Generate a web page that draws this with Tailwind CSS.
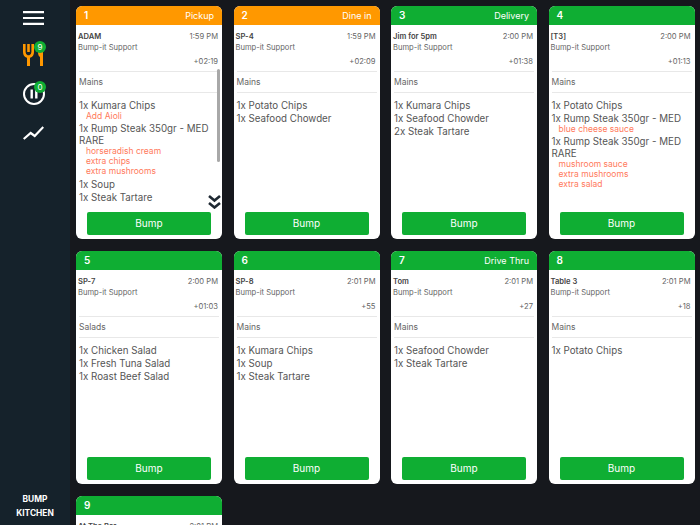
<!DOCTYPE html>
<html><head><meta charset="utf-8"><script src="https://cdn.jsdelivr.net/npm/@tailwindcss/browser@4"></script></head>
<body class="m-0 h-[525px] w-[700px] overflow-hidden bg-[#16181d] font-['Inter',sans-serif]">
<div class="flex h-[525px] w-[700px] overflow-hidden">
<aside class="flex h-full w-[70px] shrink-0 flex-col items-center bg-[#15222b] pr-[3px]">
  <svg class="mt-[11px]" width="21" height="14" viewBox="0 0 21 14"><path d="M0 1.200h21M0 7h21M0 12.800h21" stroke="#fff" stroke-width="2.200"/></svg>
  <div class="relative mt-[19px] h-[22px] w-[21px]">
    <svg width="21" height="22" viewBox="0 0 21 22" class="block"><path d="M1.300 0v8q0 3.500 3 4.500h2.400Q9.700 11.500 9.700 8V0M5.500 0v8" fill="none" stroke="#ff9800" stroke-width="2.600"/><path d="M4 12h3v10H4z" fill="#ff9800"/><path d="M15 8h5v14h-3V13q-2-1-2-5z" fill="#ff9800"/></svg>
    <span class="absolute left-[11px] top-[-3px] flex h-[12px] w-[12px] items-center justify-center rounded-full bg-[#0fae33] text-[8px] leading-none text-white">9</span>
  </div>
  <div class="relative mt-[17px] h-[22px] w-[22px]">
    <svg width="22" height="22" viewBox="0 0 22 22" class="block"><circle cx="11" cy="11" r="10" fill="none" stroke="#fff" stroke-width="2"/><path d="M8.700 6.500v9M13.300 6.500v9" stroke="#fff" stroke-width="2.400"/></svg>
    <span class="absolute left-[11.500px] top-[-2px] flex h-[12px] w-[12px] items-center justify-center rounded-full bg-[#0fae33] text-[8px] leading-none text-white">0</span>
  </div>
  <svg class="mt-[21px]" width="21" height="14" viewBox="0 0 21 14"><path d="M0.700 13l7-6 4 3 8.600-9" fill="none" stroke="#fff" stroke-width="2.200"/></svg>
  <div class="mb-[5px] mt-auto pl-[3px] text-center text-[8.400px] font-bold leading-[14px] text-white">
    <div>BUMP</div><div>KITCHEN</div>
  </div>
</aside>
<main class="grid flex-1 grid-cols-[repeat(4,146px)] content-start gap-x-[11.500px] gap-y-[12px] pl-[6px] pt-[6px]">

<article class="flex h-[233px] flex-col overflow-hidden rounded-[6px] bg-white">
  <header class="flex h-[19px] shrink-0 items-center justify-between bg-[#ff9800] pl-[8px] pr-[8px] text-white"><b class="text-[10px] font-semibold">1</b><span class="text-[9px]">Pickup</span></header>
  <div class="relative flex min-h-0 flex-1 flex-col">
    <div class="px-[2px] pt-[7px] text-[7.600px] leading-[10px] text-[#666]">
      <div class="flex justify-between pr-[2px]"><b class="font-semibold text-[#444]">ADAM</b><span>1:59 PM</span></div>
      <div class="mt-[1px]">Bump-it Support</div>
      <div class="mt-[4px] pr-[2px] text-right">+02:19</div>
    </div>
    <div class="mx-[3px] mt-[4px] border-y border-[#e8e8e8] pb-[4px] pt-[5px] text-[8.500px] leading-[11px] text-[#666]">Mains</div>
    <div class="mx-[3px] mt-[6px] text-[9.750px] leading-[12px] text-[#555]">
      <div class="mt-[1px]">1x Kumara Chips</div><div class="pb-[2px] pl-[7px] text-[8.500px] leading-[8px] text-[#ff7a5c]">Add Aioli</div>
      <div class="mt-[1px] pr-[6px]">1x Rump Steak 350gr - MED RARE</div>
      <div class="pb-[2px] pl-[7px] text-[8.500px] leading-[8px] text-[#ff7a5c]">horseradish cream</div><div class="pb-[2px] pl-[7px] text-[8.500px] leading-[8px] text-[#ff7a5c]">extra chips</div><div class="pb-[2px] pl-[7px] text-[8.500px] leading-[8px] text-[#ff7a5c]">extra mushrooms</div>
      <div class="mt-[2px]">1x Soup</div><div class="mt-[1px]">1x Steak Tartare</div>
    </div>
    <span class="absolute left-[141px] top-[44px] h-[93px] w-[3px] rounded-full bg-[#a8a8a8]"></span>
    <svg class="absolute right-[1px] top-[170px]" width="13" height="14" viewBox="0 0 13 14"><path d="M1 1l5.500 4.500 5.500-4.500M1 8l5.500 4.500 5.500-4.500" fill="none" stroke="#1f2933" stroke-width="2.600"/></svg>
    <button class="mx-auto mb-[4px] mt-auto block h-[23px] w-[124px] rounded-[2px] bg-[#0fae33] text-[10px] text-white">Bump</button>
  </div>
</article>

<article class="flex h-[233px] flex-col overflow-hidden rounded-[6px] bg-white">
  <header class="flex h-[19px] shrink-0 items-center justify-between bg-[#ff9800] pl-[8px] pr-[8px] text-white"><b class="text-[10px] font-semibold">2</b><span class="text-[9px]">Dine in</span></header>
  <div class="flex min-h-0 flex-1 flex-col">
    <div class="px-[2px] pt-[7px] text-[7.600px] leading-[10px] text-[#666]">
      <div class="flex justify-between pr-[2px]"><b class="font-semibold text-[#444]">SP-4</b><span>1:59 PM</span></div>
      <div class="mt-[1px]">Bump-it Support</div>
      <div class="mt-[4px] pr-[2px] text-right">+02:09</div>
    </div>
    <div class="mx-[3px] mt-[4px] border-y border-[#e8e8e8] pb-[4px] pt-[5px] text-[8.500px] leading-[11px] text-[#666]">Mains</div>
    <div class="mx-[3px] mt-[6px] text-[9.750px] leading-[12px] text-[#555]"><div class="mt-[1px]">1x Potato Chips</div><div class="mt-[1px]">1x Seafood Chowder</div></div>
    <button class="mx-auto mb-[4px] mt-auto block h-[23px] w-[124px] rounded-[2px] bg-[#0fae33] text-[10px] text-white">Bump</button>
  </div>
</article>

<article class="flex h-[233px] flex-col overflow-hidden rounded-[6px] bg-white">
  <header class="flex h-[19px] shrink-0 items-center justify-between bg-[#0fae33] pl-[8px] pr-[8px] text-white"><b class="text-[10px] font-semibold">3</b><span class="text-[9px]">Delivery</span></header>
  <div class="flex min-h-0 flex-1 flex-col">
    <div class="px-[2px] pt-[7px] text-[7.600px] leading-[10px] text-[#666]">
      <div class="flex justify-between pr-[2px]"><b class="font-semibold text-[#444]">Jim for 5pm</b><span>2:00 PM</span></div>
      <div class="mt-[1px]">Bump-it Support</div>
      <div class="mt-[4px] pr-[2px] text-right">+01:38</div>
    </div>
    <div class="mx-[3px] mt-[4px] border-y border-[#e8e8e8] pb-[4px] pt-[5px] text-[8.500px] leading-[11px] text-[#666]">Mains</div>
    <div class="mx-[3px] mt-[6px] text-[9.750px] leading-[12px] text-[#555]"><div class="mt-[1px]">1x Kumara Chips</div><div class="mt-[1px]">1x Seafood Chowder</div><div class="mt-[1px]">2x Steak Tartare</div></div>
    <button class="mx-auto mb-[4px] mt-auto block h-[23px] w-[124px] rounded-[2px] bg-[#0fae33] text-[10px] text-white">Bump</button>
  </div>
</article>

<article class="flex h-[233px] flex-col overflow-hidden rounded-[6px] bg-white">
  <header class="flex h-[19px] shrink-0 items-center justify-between bg-[#0fae33] pl-[8px] pr-[8px] text-white"><b class="text-[10px] font-semibold">4</b></header>
  <div class="flex min-h-0 flex-1 flex-col">
    <div class="px-[2px] pt-[7px] text-[7.600px] leading-[10px] text-[#666]">
      <div class="flex justify-between pr-[2px]"><b class="font-semibold text-[#444]">[T3]</b><span>2:00 PM</span></div>
      <div class="mt-[1px]">Bump-it Support</div>
      <div class="mt-[4px] pr-[2px] text-right">+01:13</div>
    </div>
    <div class="mx-[3px] mt-[4px] border-y border-[#e8e8e8] pb-[4px] pt-[5px] text-[8.500px] leading-[11px] text-[#666]">Mains</div>
    <div class="mx-[3px] mt-[6px] text-[9.750px] leading-[12px] text-[#555]">
      <div class="mt-[1px]">1x Potato Chips</div><div class="mt-[1px]">1x Rump Steak 350gr - MED</div>
      <div class="pb-[2px] pl-[7px] text-[8.500px] leading-[8px] text-[#ff7a5c]">blue cheese sauce</div>
      <div class="mt-[1px] pr-[6px]">1x Rump Steak 350gr - MED RARE</div>
      <div class="pb-[2px] pl-[7px] text-[8.500px] leading-[8px] text-[#ff7a5c]">mushroom sauce</div><div class="pb-[2px] pl-[7px] text-[8.500px] leading-[8px] text-[#ff7a5c]">extra mushrooms</div><div class="pb-[2px] pl-[7px] text-[8.500px] leading-[8px] text-[#ff7a5c]">extra salad</div>
    </div>
    <button class="mx-auto mb-[4px] mt-auto block h-[23px] w-[124px] rounded-[2px] bg-[#0fae33] text-[10px] text-white">Bump</button>
  </div>
</article>

<article class="flex h-[233px] flex-col overflow-hidden rounded-[6px] bg-white">
  <header class="flex h-[19px] shrink-0 items-center justify-between bg-[#0fae33] pl-[8px] pr-[8px] text-white"><b class="text-[10px] font-semibold">5</b></header>
  <div class="flex min-h-0 flex-1 flex-col">
    <div class="px-[2px] pt-[7px] text-[7.600px] leading-[10px] text-[#666]">
      <div class="flex justify-between pr-[2px]"><b class="font-semibold text-[#444]">SP-7</b><span>2:00 PM</span></div>
      <div class="mt-[1px]">Bump-it Support</div>
      <div class="mt-[4px] pr-[2px] text-right">+01:03</div>
    </div>
    <div class="mx-[3px] mt-[4px] border-y border-[#e8e8e8] pb-[4px] pt-[5px] text-[8.500px] leading-[11px] text-[#666]">Salads</div>
    <div class="mx-[3px] mt-[6px] text-[9.750px] leading-[12px] text-[#555]"><div class="mt-[1px]">1x Chicken Salad</div><div class="mt-[1px]">1x Fresh Tuna Salad</div><div class="mt-[1px]">1x Roast Beef Salad</div></div>
    <button class="mx-auto mb-[4px] mt-auto block h-[23px] w-[124px] rounded-[2px] bg-[#0fae33] text-[10px] text-white">Bump</button>
  </div>
</article>

<article class="flex h-[233px] flex-col overflow-hidden rounded-[6px] bg-white">
  <header class="flex h-[19px] shrink-0 items-center justify-between bg-[#0fae33] pl-[8px] pr-[8px] text-white"><b class="text-[10px] font-semibold">6</b></header>
  <div class="flex min-h-0 flex-1 flex-col">
    <div class="px-[2px] pt-[7px] text-[7.600px] leading-[10px] text-[#666]">
      <div class="flex justify-between pr-[2px]"><b class="font-semibold text-[#444]">SP-8</b><span>2:01 PM</span></div>
      <div class="mt-[1px]">Bump-it Support</div>
      <div class="mt-[4px] pr-[2px] text-right">+55</div>
    </div>
    <div class="mx-[3px] mt-[4px] border-y border-[#e8e8e8] pb-[4px] pt-[5px] text-[8.500px] leading-[11px] text-[#666]">Mains</div>
    <div class="mx-[3px] mt-[6px] text-[9.750px] leading-[12px] text-[#555]"><div class="mt-[1px]">1x Kumara Chips</div><div class="mt-[1px]">1x Soup</div><div class="mt-[1px]">1x Steak Tartare</div></div>
    <button class="mx-auto mb-[4px] mt-auto block h-[23px] w-[124px] rounded-[2px] bg-[#0fae33] text-[10px] text-white">Bump</button>
  </div>
</article>

<article class="flex h-[233px] flex-col overflow-hidden rounded-[6px] bg-white">
  <header class="flex h-[19px] shrink-0 items-center justify-between bg-[#0fae33] pl-[8px] pr-[8px] text-white"><b class="text-[10px] font-semibold">7</b><span class="text-[9px]">Drive Thru</span></header>
  <div class="flex min-h-0 flex-1 flex-col">
    <div class="px-[2px] pt-[7px] text-[7.600px] leading-[10px] text-[#666]">
      <div class="flex justify-between pr-[2px]"><b class="font-semibold text-[#444]">Tom</b><span>2:01 PM</span></div>
      <div class="mt-[1px]">Bump-it Support</div>
      <div class="mt-[4px] pr-[2px] text-right">+27</div>
    </div>
    <div class="mx-[3px] mt-[4px] border-y border-[#e8e8e8] pb-[4px] pt-[5px] text-[8.500px] leading-[11px] text-[#666]">Mains</div>
    <div class="mx-[3px] mt-[6px] text-[9.750px] leading-[12px] text-[#555]"><div class="mt-[1px]">1x Seafood Chowder</div><div class="mt-[1px]">1x Steak Tartare</div></div>
    <button class="mx-auto mb-[4px] mt-auto block h-[23px] w-[124px] rounded-[2px] bg-[#0fae33] text-[10px] text-white">Bump</button>
  </div>
</article>

<article class="flex h-[233px] flex-col overflow-hidden rounded-[6px] bg-white">
  <header class="flex h-[19px] shrink-0 items-center justify-between bg-[#0fae33] pl-[8px] pr-[8px] text-white"><b class="text-[10px] font-semibold">8</b></header>
  <div class="flex min-h-0 flex-1 flex-col">
    <div class="px-[2px] pt-[7px] text-[7.600px] leading-[10px] text-[#666]">
      <div class="flex justify-between pr-[2px]"><b class="font-semibold text-[#444]">Table 3</b><span>2:01 PM</span></div>
      <div class="mt-[1px]">Bump-it Support</div>
      <div class="mt-[4px] pr-[2px] text-right">+18</div>
    </div>
    <div class="mx-[3px] mt-[4px] border-y border-[#e8e8e8] pb-[4px] pt-[5px] text-[8.500px] leading-[11px] text-[#666]">Mains</div>
    <div class="mx-[3px] mt-[6px] text-[9.750px] leading-[12px] text-[#555]"><div class="mt-[1px]">1x Potato Chips</div></div>
    <button class="mx-auto mb-[4px] mt-auto block h-[23px] w-[124px] rounded-[2px] bg-[#0fae33] text-[10px] text-white">Bump</button>
  </div>
</article>

<article class="flex h-[233px] flex-col overflow-hidden rounded-[6px] bg-white">
  <header class="flex h-[19px] shrink-0 items-center justify-between bg-[#0fae33] pl-[8px] pr-[8px] text-white"><b class="text-[10px] font-semibold">9</b></header>
  <div class="flex min-h-0 flex-1 flex-col">
    <div class="px-[2px] pt-[7px] text-[7.600px] leading-[10px] text-[#666]">
      <div class="flex justify-between pr-[2px]"><b class="font-semibold text-[#444]">At The Bar</b><span>2:01 PM</span></div>
    </div>
  </div>
</article>

</main>
</div>
</body></html>
